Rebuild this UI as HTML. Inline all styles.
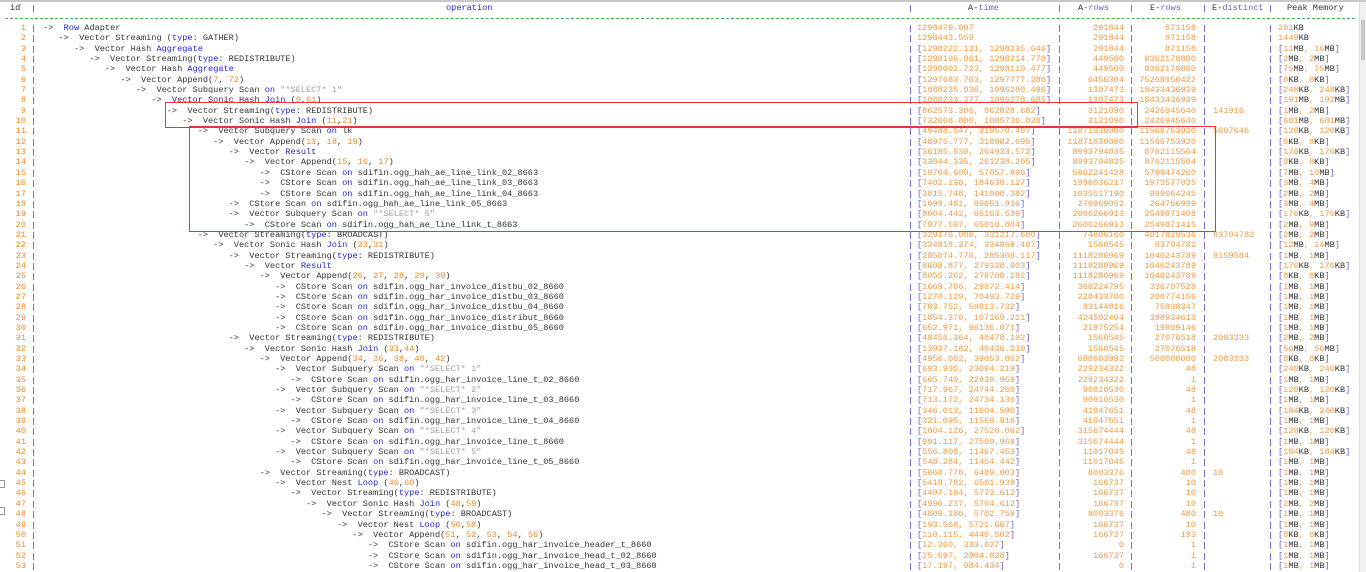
<!DOCTYPE html>
<html><head><meta charset="utf-8"><style>
body{margin:0;width:1366px;height:572px;overflow:hidden;background:#fff;font-family:"Liberation Mono",monospace;font-size:8.6px;color:#333;position:relative}
.top{position:absolute;left:0;top:0;width:1366px;height:2px;background:#c8c8c8}
.sb{position:absolute;right:0;top:2px;width:6px;height:570px;background:#f0f0f0;border-left:1px solid #ddd}
.sb:before{content:"";position:absolute;left:1px;top:18px;width:4px;height:40px;background:#c9c9c9}
.hd{position:absolute;left:0;top:3px;width:1366px;height:10px;line-height:10px}
.hd span{position:absolute;top:0;white-space:pre}
.dash{position:absolute;left:5px;top:18px;width:1350px;border-top:1px dashed #4caf50}
.rows{position:absolute;left:0;top:23px}
.r,.hd{background-image:linear-gradient(#7a6dd0,#7a6dd0),linear-gradient(#7a6dd0,#7a6dd0),linear-gradient(#7a6dd0,#7a6dd0),linear-gradient(#7a6dd0,#7a6dd0),linear-gradient(#7a6dd0,#7a6dd0),linear-gradient(#7a6dd0,#7a6dd0);background-size:1px 7px;background-repeat:no-repeat;background-position:33px 2px,910px 2px,1059px 2px,1131px 2px,1204px 2px,1270px 2px}
.r{position:relative;width:1366px;height:10.35px;line-height:10.35px;white-space:pre}
.r>*{position:absolute;top:0;white-space:pre}
d{right:1340px;color:#f08a24}
o{left:43px}
t{left:917px;color:#f49a40}
h{right:242px;color:#f49a40}
v{right:170px;color:#f49a40}
w{left:1213px;color:#f49a40}
m{left:1278px;color:#f49a40}
k{color:#2323d6}
n{color:#f08a24}
z{color:#a0a0a0}
y{color:#6b5fc9}
x{color:#333}
.box{position:absolute;border:1px solid #e8343a}
</style></head><body>
<div class="top"></div>
<div class="hd"><span style="left:10px">id</span><span style="left:446px;color:#2323d6">operation</span><span style="left:968px">A-<y>time</y></span><span style="left:1078px">A-<y>rows</y></span><span style="left:1150px">E-<y>rows</y></span><span style="left:1212px">E-<y>distinct</y></span><span style="left:1287px">Peak Memory</span></div>
<div class="dash"></div>
<div class="rows">
<div class="r"><d>1</d><o>->  <k>Row</k> Adapter</o><t>1298479.007</t><h>291844</h><v>871158</v><m>201<x>KB</x></m></div>
<div class="r"><d>2</d><o>   ->  Vector Streaming (<k>type</k>: GATHER)</o><t>1298443.559</t><h>291844</h><v>871158</v><m>1449<x>KB</x></m></div>
<div class="r"><d>3</d><o>      ->  Vector Hash <k>Aggregate</k></o><t><y>[</y>1298222.131, 1298235.646<y>]</y></t><h>291844</h><v>871158</v><m><y>[</y>11<x>MB</x>, 16<x>MB</x><y>]</y></m></div>
<div class="r"><d>4</d><o>         ->  Vector Streaming(<k>type</k>: REDISTRIBUTE)</o><t><y>[</y>1298195.061, 1298214.778<y>]</y></t><h>449500</h><v>8362178880</v><m><y>[</y>2<x>MB</x>, 2<x>MB</x><y>]</y></m></div>
<div class="r"><d>5</d><o>            ->  Vector Hash <k>Aggregate</k></o><t><y>[</y>1298002.723, 1298110.477<y>]</y></t><h>449500</h><v>8362178880</v><m><y>[</y>75<x>MB</x>, 75<x>MB</x><y>]</y></m></div>
<div class="r"><d>6</d><o>               ->  Vector Append(<n>7</n>, <n>72</n>)</o><t><y>[</y>1297683.703, 1297777.286<y>]</y></t><h>6456304</h><v>75268056422</v><m><y>[</y>8<x>KB</x>, 8<x>KB</x><y>]</y></m></div>
<div class="r"><d>7</d><o>                  ->  Vector Subquery Scan <k>on</k> <z>"*SELECT* 1"</z></o><t><y>[</y>1088235.036, 1096280.496<y>]</y></t><h>1307473</h><v>18433436939</v><m><y>[</y>248<x>KB</x>, 248<x>KB</x><y>]</y></m></div>
<div class="r"><d>8</d><o>                     ->  Vector Sonic Hash <k>Join</k> (<n>9</n>,<n>61</n>)</o><t><y>[</y>1088233.377, 1096278.685<y>]</y></t><h>1307473</h><v>18433436939</v><m><y>[</y>191<x>MB</x>, 192<x>MB</x><y>]</y></m></div>
<div class="r"><d>9</d><o>                        ->  Vector Streaming(<k>type</k>: REDISTRIBUTE)</o><t><y>[</y>862573.306, 862828.682<y>]</y></t><h>3121090</h><v>2426945640</v><w>141916</w><m><y>[</y>1<x>MB</x>, 2<x>MB</x><y>]</y></m></div>
<div class="r"><d>10</d><o>                           ->  Vector Sonic Hash <k>Join</k> (<n>11</n>,<n>21</n>)</o><t><y>[</y>732668.800, 1085736.828<y>]</y></t><h>3121090</h><v>2426945640</v><m><y>[</y>681<x>MB</x>, 681<x>MB</x><y>]</y></m></div>
<div class="r"><d>11</d><o>                              ->  Vector Subquery Scan <k>on</k> lk</o><t><y>[</y>49488.547, 319570.497<y>]</y></t><h>11871030800</h><v>11566753920</v><w>5807646</w><m><y>[</y>120<x>KB</x>, 120<x>KB</x><y>]</y></m></div>
<div class="r"><d>12</d><o>                                 ->  Vector Append(<n>13</n>, <n>18</n>, <n>19</n>)</o><t><y>[</y>48975.777, 318982.695<y>]</y></t><h>11871030800</h><v>11566753920</v><m><y>[</y>8<x>KB</x>, 8<x>KB</x><y>]</y></m></div>
<div class="r"><d>13</d><o>                                    ->  Vector <k>Result</k></o><t><y>[</y>36185.530, 264933.572<y>]</y></t><h>8993794835</h><v>8762115504</v><m><y>[</y>176<x>KB</x>, 176<x>KB</x><y>]</y></m></div>
<div class="r"><d>14</d><o>                                       ->  Vector Append(<n>15</n>, <n>16</n>, <n>17</n>)</o><t><y>[</y>33044.335, 261238.205<y>]</y></t><h>8993794835</h><v>8762115504</v><m><y>[</y>8<x>KB</x>, 8<x>KB</x><y>]</y></m></div>
<div class="r"><d>15</d><o>                                          ->  CStore Scan <k>on</k> sdifin.ogg_hah_ae_line_link_02_8663</o><t><y>[</y>19764.600, 57057.896<y>]</y></t><h>5962241428</h><v>5799474260</v><m><y>[</y>7<x>MB</x>, 10<x>MB</x><y>]</y></m></div>
<div class="r"><d>16</d><o>                                          ->  CStore Scan <k>on</k> sdifin.ogg_hah_ae_line_link_03_8663</o><t><y>[</y>7402.138, 184638.127<y>]</y></t><h>1996036217</h><v>1973577035</v><m><y>[</y>3<x>MB</x>, 4<x>MB</x><y>]</y></m></div>
<div class="r"><d>17</d><o>                                          ->  CStore Scan <k>on</k> sdifin.ogg_hah_ae_line_link_04_8663</o><t><y>[</y>3815.748, 141900.382<y>]</y></t><h>1035517190</h><v>989064245</v><m><y>[</y>2<x>MB</x>, 2<x>MB</x><y>]</y></m></div>
<div class="r"><d>18</d><o>                                    ->  CStore Scan <k>on</k> sdifin.ogg_hah_ae_line_link_05_8663</o><t><y>[</y>1099.481, 89051.936<y>]</y></t><h>270969052</h><v>264766999</v><m><y>[</y>3<x>MB</x>, 4<x>MB</x><y>]</y></m></div>
<div class="r"><d>19</d><o>                                    ->  Vector Subquery Scan <k>on</k> <z>"*SELECT* 5"</z></o><t><y>[</y>8004.442, 66163.539<y>]</y></t><h>2606266913</h><v>2549871408</v><m><y>[</y>176<x>KB</x>, 176<x>KB</x><y>]</y></m></div>
<div class="r"><d>20</d><o>                                       ->  CStore Scan <k>on</k> sdifin.ogg_hah_ae_line_link_t_8663</o><t><y>[</y>7077.597, 65010.884<y>]</y></t><h>2606266913</h><v>2549871415</v><m><y>[</y>2<x>MB</x>, 9<x>MB</x><y>]</y></m></div>
<div class="r"><d>21</d><o>                              ->  Vector Streaming(<k>type</k>: BROADCAST)</o><t><y>[</y>329176.000, 331217.600<y>]</y></t><h>74906160</h><v>4017829536</v><w>83704782</w><m><y>[</y>2<x>MB</x>, 2<x>MB</x><y>]</y></m></div>
<div class="r"><d>22</d><o>                                 ->  Vector Sonic Hash <k>Join</k> (<n>23</n>,<n>31</n>)</o><t><y>[</y>334818.374, 334869.487<y>]</y></t><h>1560545</h><v>83704782</v><m><y>[</y>12<x>MB</x>, 14<x>MB</x><y>]</y></m></div>
<div class="r"><d>23</d><o>                                    ->  Vector Streaming(<k>type</k>: REDISTRIBUTE)</o><t><y>[</y>285074.776, 285308.117<y>]</y></t><h>1118280969</h><v>1040243789</v><w>8159584</w><m><y>[</y>1<x>MB</x>, 1<x>MB</x><y>]</y></m></div>
<div class="r"><d>24</d><o>                                       ->  Vector <k>Result</k></o><t><y>[</y>8608.877, 279138.903<y>]</y></t><h>1118280969</h><v>1040243789</v><m><y>[</y>176<x>KB</x>, 176<x>KB</x><y>]</y></m></div>
<div class="r"><d>25</d><o>                                          ->  Vector Append(<n>26</n>, <n>27</n>, <n>28</n>, <n>29</n>, <n>30</n>)</o><t><y>[</y>8055.262, 278708.282<y>]</y></t><h>1118280969</h><v>1040243789</v><m><y>[</y>8<x>KB</x>, 8<x>KB</x><y>]</y></m></div>
<div class="r"><d>26</d><o>                                             ->  CStore Scan <k>on</k> sdifin.ogg_har_invoice_distbu_02_8660</o><t><y>[</y>1669.786, 29072.414<y>]</y></t><h>360224795</h><v>336707528</v><m><y>[</y>1<x>MB</x>, 1<x>MB</x><y>]</y></m></div>
<div class="r"><d>27</d><o>                                             ->  CStore Scan <k>on</k> sdifin.ogg_har_invoice_distbu_03_8660</o><t><y>[</y>1270.129, 70493.729<y>]</y></t><h>228433700</h><v>208774156</v><m><y>[</y>1<x>MB</x>, 1<x>MB</x><y>]</y></m></div>
<div class="r"><d>28</d><o>                                             ->  CStore Scan <k>on</k> sdifin.ogg_har_invoice_distbu_04_8660</o><t><y>[</y>783.752, 59813.732<y>]</y></t><h>83144816</h><v>75938347</v><m><y>[</y>1<x>MB</x>, 1<x>MB</x><y>]</y></m></div>
<div class="r"><d>29</d><o>                                             ->  CStore Scan <k>on</k> sdifin.ogg_har_invoice_distribut_8660</o><t><y>[</y>1854.370, 107169.211<y>]</y></t><h>424502404</h><v>398934613</v><m><y>[</y>1<x>MB</x>, 1<x>MB</x><y>]</y></m></div>
<div class="r"><d>30</d><o>                                             ->  CStore Scan <k>on</k> sdifin.ogg_har_invoice_distbu_05_8660</o><t><y>[</y>652.971, 96136.071<y>]</y></t><h>21975254</h><v>19889146</v><m><y>[</y>1<x>MB</x>, 1<x>MB</x><y>]</y></m></div>
<div class="r"><d>31</d><o>                                    ->  Vector Streaming(<k>type</k>: REDISTRIBUTE)</o><t><y>[</y>48456.364, 48478.192<y>]</y></t><h>1560545</h><v>27076518</v><w>2083333</w><m><y>[</y>2<x>MB</x>, 2<x>MB</x><y>]</y></m></div>
<div class="r"><d>32</d><o>                                       ->  Vector Sonic Hash <k>Join</k> (<n>33</n>,<n>44</n>)</o><t><y>[</y>13937.182, 48436.239<y>]</y></t><h>1560545</h><v>27076518</v><m><y>[</y>56<x>MB</x>, 56<x>MB</x><y>]</y></m></div>
<div class="r"><d>33</d><o>                                          ->  Vector Append(<n>34</n>, <n>36</n>, <n>38</n>, <n>40</n>, <n>42</n>)</o><t><y>[</y>4956.002, 39053.862<y>]</y></t><h>688683992</h><v>500000000</v><w>2083333</w><m><y>[</y>8<x>KB</x>, 8<x>KB</x><y>]</y></m></div>
<div class="r"><d>34</d><o>                                             ->  Vector Subquery Scan <k>on</k> <z>"*SELECT* 1"</z></o><t><y>[</y>693.935, 23094.219<y>]</y></t><h>229234322</h><v>48</v><m><y>[</y>240<x>KB</x>, 240<x>KB</x><y>]</y></m></div>
<div class="r"><d>35</d><o>                                                ->  CStore Scan <k>on</k> sdifin.ogg_har_invoice_line_t_02_8660</o><t><y>[</y>665.740, 22939.969<y>]</y></t><h>229234322</h><v>1</v><m><y>[</y>1<x>MB</x>, 1<x>MB</x><y>]</y></m></div>
<div class="r"><d>36</d><o>                                             ->  Vector Subquery Scan <k>on</k> <z>"*SELECT* 2"</z></o><t><y>[</y>717.967, 24744.260<y>]</y></t><h>90810530</h><v>48</v><m><y>[</y>120<x>KB</x>, 120<x>KB</x><y>]</y></m></div>
<div class="r"><d>37</d><o>                                                ->  CStore Scan <k>on</k> sdifin.ogg_har_invoice_line_t_03_8660</o><t><y>[</y>713.172, 24734.136<y>]</y></t><h>90810530</h><v>1</v><m><y>[</y>1<x>MB</x>, 1<x>MB</x><y>]</y></m></div>
<div class="r"><d>38</d><o>                                             ->  Vector Subquery Scan <k>on</k> <z>"*SELECT* 3"</z></o><t><y>[</y>346.013, 11604.590<y>]</y></t><h>41947651</h><v>48</v><m><y>[</y>184<x>KB</x>, 240<x>KB</x><y>]</y></m></div>
<div class="r"><d>39</d><o>                                                ->  CStore Scan <k>on</k> sdifin.ogg_har_invoice_line_t_04_8660</o><t><y>[</y>321.095, 11569.916<y>]</y></t><h>41947651</h><v>1</v><m><y>[</y>1<x>MB</x>, 1<x>MB</x><y>]</y></m></div>
<div class="r"><d>40</d><o>                                             ->  Vector Subquery Scan <k>on</k> <z>"*SELECT* 4"</z></o><t><y>[</y>1004.126, 27528.062<y>]</y></t><h>315674444</h><v>48</v><m><y>[</y>120<x>KB</x>, 120<x>KB</x><y>]</y></m></div>
<div class="r"><d>41</d><o>                                                ->  CStore Scan <k>on</k> sdifin.ogg_har_invoice_line_t_8660</o><t><y>[</y>991.117, 27509.969<y>]</y></t><h>315674444</h><v>1</v><m><y>[</y>1<x>MB</x>, 1<x>MB</x><y>]</y></m></div>
<div class="r"><d>42</d><o>                                             ->  Vector Subquery Scan <k>on</k> <z>"*SELECT* 5"</z></o><t><y>[</y>556.808, 11467.453<y>]</y></t><h>11017045</h><v>48</v><m><y>[</y>184<x>KB</x>, 184<x>KB</x><y>]</y></m></div>
<div class="r"><d>43</d><o>                                                ->  CStore Scan <k>on</k> sdifin.ogg_har_invoice_line_t_05_8660</o><t><y>[</y>548.284, 11454.442<y>]</y></t><h>11017045</h><v>1</v><m><y>[</y>1<x>MB</x>, 1<x>MB</x><y>]</y></m></div>
<div class="r"><d>44</d><o>                                          ->  Vector Streaming(<k>type</k>: BROADCAST)</o><t><y>[</y>5868.778, 6489.003<y>]</y></t><h>8003376</h><v>480</v><w>10</w><m><y>[</y>1<x>MB</x>, 1<x>MB</x><y>]</y></m></div>
<div class="r"><d>45</d><o>                                             ->  Vector Nest <k>Loop</k> (<n>46</n>,<n>60</n>)</o><t><y>[</y>5418.782, 6501.939<y>]</y></t><h>166737</h><v>10</v><m><y>[</y>1<x>MB</x>, 1<x>MB</x><y>]</y></m></div>
<div class="r"><d>46</d><o>                                                ->  Vector Streaming(<k>type</k>: REDISTRIBUTE)</o><t><y>[</y>4497.194, 5773.612<y>]</y></t><h>166737</h><v>10</v><m><y>[</y>1<x>MB</x>, 1<x>MB</x><y>]</y></m></div>
<div class="r"><d>47</d><o>                                                   ->  Vector Sonic Hash <k>Join</k> (<n>48</n>,<n>59</n>)</o><t><y>[</y>4996.237, 5764.612<y>]</y></t><h>166737</h><v>10</v><m><y>[</y>2<x>MB</x>, 2<x>MB</x><y>]</y></m></div>
<div class="r"><d>48</d><o>                                                      ->  Vector Streaming(<k>type</k>: BROADCAST)</o><t><y>[</y>4809.186, 5702.759<y>]</y></t><h>8003376</h><v>480</v><w>10</w><m><y>[</y>1<x>MB</x>, 1<x>MB</x><y>]</y></m></div>
<div class="r"><d>49</d><o>                                                         ->  Vector Nest <k>Loop</k> (<n>50</n>,<n>58</n>)</o><t><y>[</y>193.568, 5721.667<y>]</y></t><h>166737</h><v>10</v><m><y>[</y>1<x>MB</x>, 1<x>MB</x><y>]</y></m></div>
<div class="r"><d>50</d><o>                                                            ->  Vector Append(<n>51</n>, <n>52</n>, <n>53</n>, <n>54</n>, <n>56</n>)</o><t><y>[</y>110.115, 4440.502<y>]</y></t><h>166737</h><v>193</v><m><y>[</y>8<x>KB</x>, 8<x>KB</x><y>]</y></m></div>
<div class="r"><d>51</d><o>                                                               ->  CStore Scan <k>on</k> sdifin.ogg_har_invoice_header_t_8660</o><t><y>[</y>12.360, 333.627<y>]</y></t><h>0</h><v>1</v><m><y>[</y>1<x>MB</x>, 1<x>MB</x><y>]</y></m></div>
<div class="r"><d>52</d><o>                                                               ->  CStore Scan <k>on</k> sdifin.ogg_har_invoice_head_t_02_8660</o><t><y>[</y>25.697, 2804.828<y>]</y></t><h>166737</h><v>1</v><m><y>[</y>1<x>MB</x>, 1<x>MB</x><y>]</y></m></div>
<div class="r"><d>53</d><o>                                                               ->  CStore Scan <k>on</k> sdifin.ogg_har_invoice_head_t_03_8660</o><t><y>[</y>17.197, 984.434<y>]</y></t><h>0</h><v>1</v><m><y>[</y>1<x>MB</x>, 1<x>MB</x><y>]</y></m></div>
</div>
<div class="box" style="left:165px;top:102px;width:971px;height:24px"></div>
<div class="box" style="left:189px;top:126px;width:1025px;height:104px"></div>
<div style="position:absolute;left:0;top:480px;width:4px;height:6px;border:1px solid #999;border-left:0"></div>
<div style="position:absolute;left:0;top:507px;width:4px;height:6px;border:1px solid #999;border-left:0"></div>
<div class="sb"></div>
</body></html>
